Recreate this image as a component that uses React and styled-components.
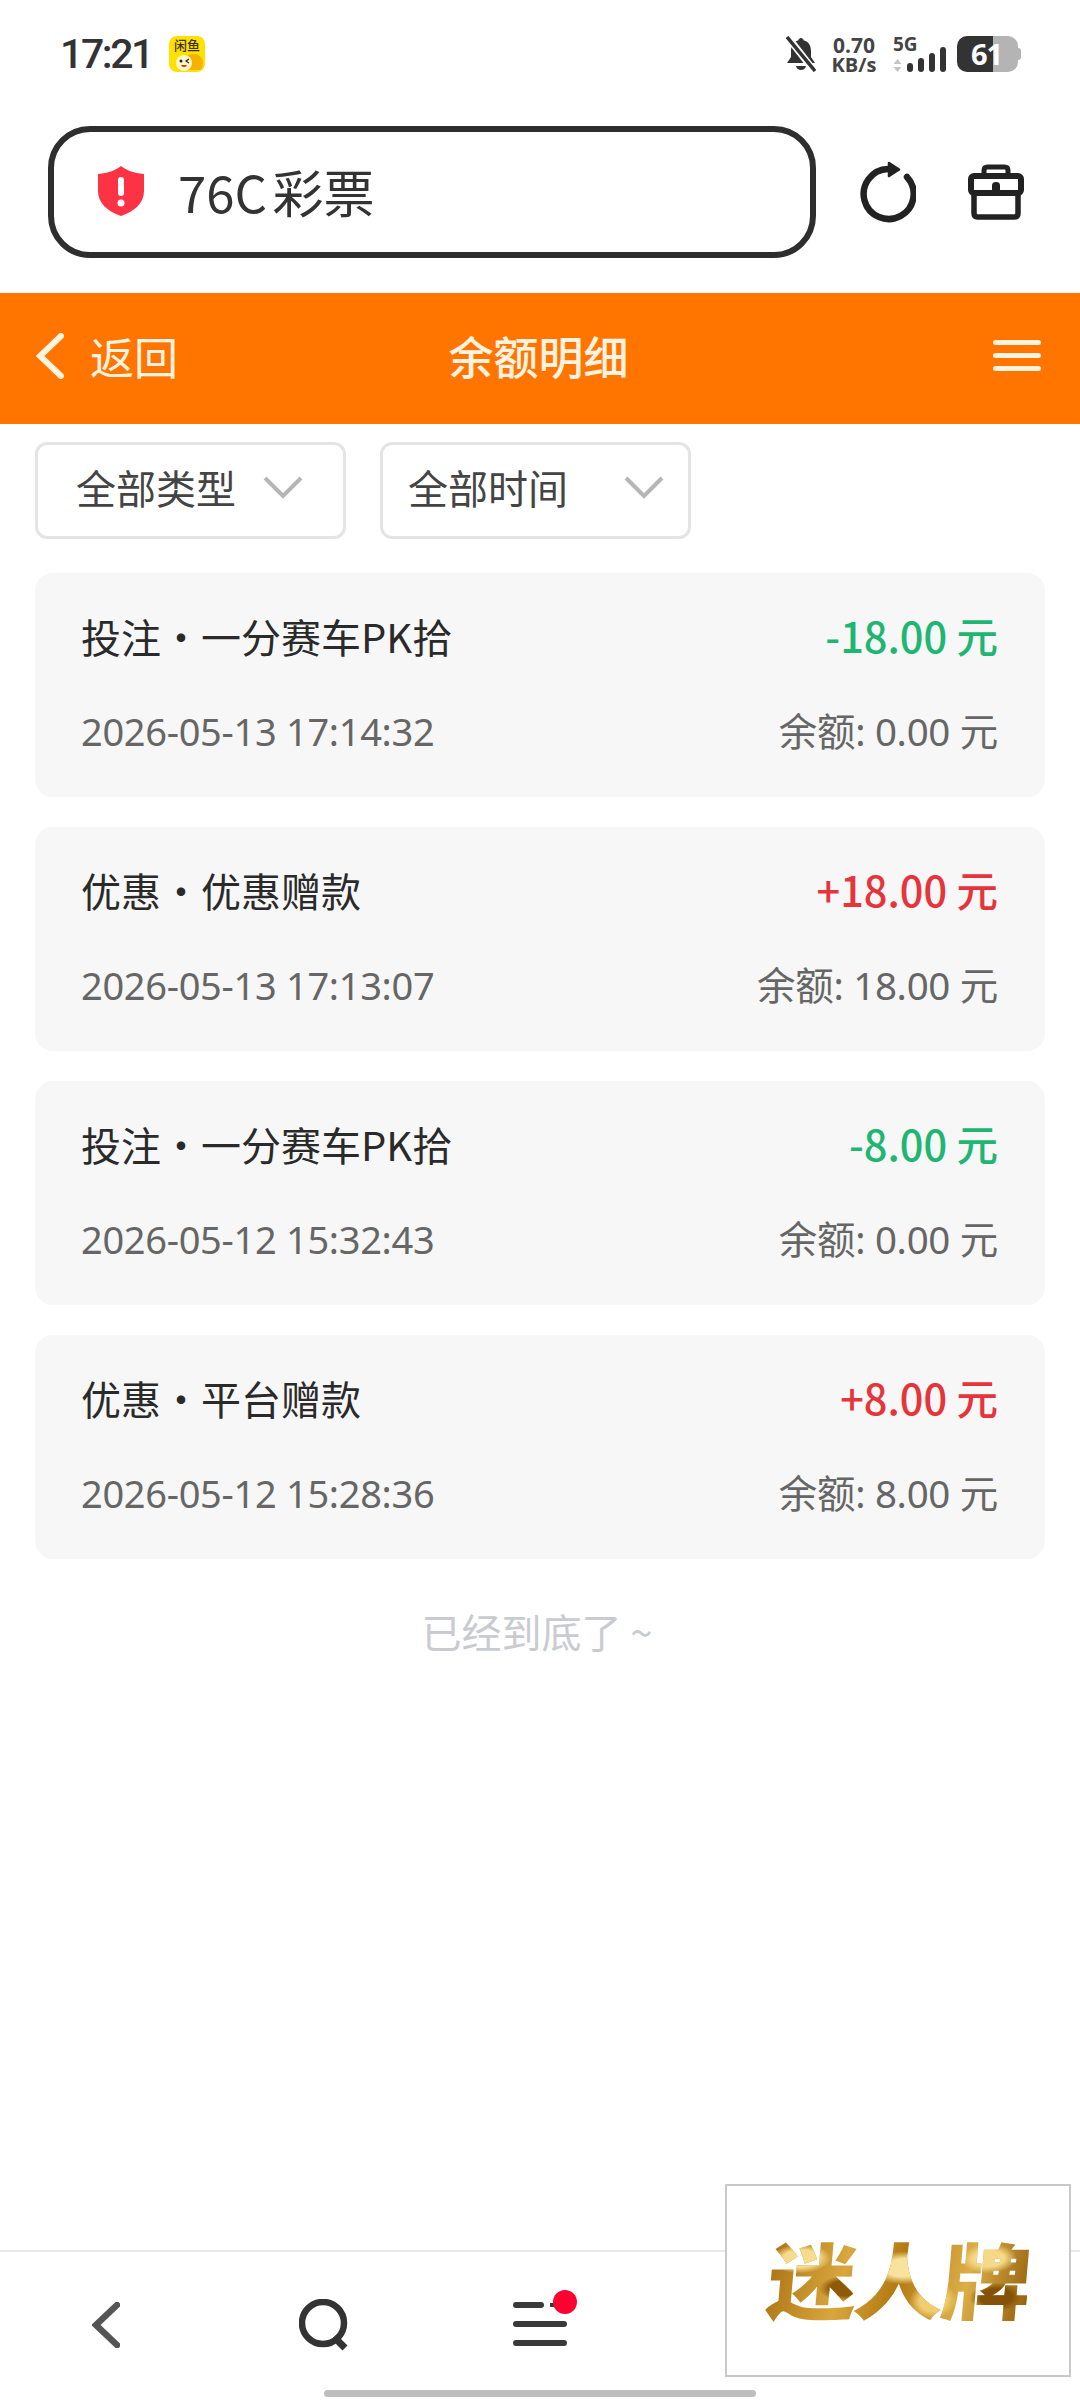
import React from "react";
import styled, { createGlobalStyle } from "styled-components";

const FONT = `"Noto Sans CJK SC", "Noto Sans", sans-serif`;

const Global = createGlobalStyle`
  html, body { margin: 0; padding: 0; background: #fff; }
  body { width: 1080px; height: 2400px; overflow: hidden; font-family: ${FONT}; }
  * { box-sizing: border-box; }
`;

const Page = styled.div`
  position: relative;
  width: 1080px;
  height: 2400px;
  display: flex;
  flex-direction: column;
  background: #fff;
`;

const StatusBar = styled.div`
  height: 126px;
  padding: 36px 62px 0 60px;
  display: flex;
  justify-content: space-between;
  align-items: flex-start;
`;
const StatusLeft = styled.div`
  display: flex;
  align-items: center;
  gap: 17px;
  height: 36px;
`;
const Time = styled.span`
  font-family: Roboto, sans-serif;
  font-weight: 500;
  font-size: 41px;
  line-height: 36px;
  letter-spacing: -2.4px;
  color: #333;
`;
const StatusRight = styled.div`
  display: flex;
  align-items: flex-start;
  height: 36px;
`;
const Speed = styled.div`
  display: flex;
  flex-direction: column;
  align-items: center;
  gap: 2px;
  width: 44px;
  margin-left: 16px;
  font-family: "Open Sans", sans-serif;
  font-weight: 700;
  color: #444;
`;
const SpeedLine = styled.span`
  font-size: ${p => p.$size}px;
  line-height: 18px;
  white-space: nowrap;
`;
const Network = styled.div`
  position: relative;
  width: 53px;
  height: 36px;
  margin-left: 17px;
`;
const NetworkLabel = styled.span`
  position: absolute;
  left: 0;
  top: 0;
  font-family: "Open Sans", sans-serif;
  font-weight: 700;
  font-size: 19px;
  line-height: 17px;
  color: #444;
`;
const Battery = styled.div`
  position: relative;
  width: 61px;
  height: 36px;
  margin-left: 11px;
  border-radius: 10px;
  background: linear-gradient(90deg, #333 0 36px, #b4b4b4 36px 100%);
  color: #fff;
  font-family: "Open Sans", sans-serif;
  font-weight: 700;
  font-size: 29px;
  line-height: 36px;
  padding-left: 14px;
  letter-spacing: -1px;
  &::after {
    content: "";
    position: absolute;
    right: -3px;
    top: 12px;
    width: 3px;
    height: 12px;
    border-radius: 0 3px 3px 0;
    background: #b4b4b4;
  }
`;

const AddressRow = styled.div`
  height: 167px;
  padding: 0 56px 35px 48px;
  display: flex;
  align-items: center;
`;
const UrlBox = styled.div`
  width: 768px;
  height: 132px;
  border: 6px solid #2e2e2e;
  border-radius: 42px;
  display: flex;
  align-items: center;
  padding: 0 0 2px 43px;
  gap: 33px;
  flex: none;
`;
const UrlText = styled.span`
  font-size: 51px;
  line-height: 60px;
  color: #333;
  word-spacing: -6px;
`;
const ToolIcons = styled.div`
  flex: 1;
  display: flex;
  justify-content: space-between;
  align-items: center;
  padding-left: 44px;
`;

const Header = styled.div`
  height: 131px;
  background: #ff7500;
  display: grid;
  grid-template-columns: 1fr auto 1fr;
  align-items: center;
  padding: 0 39px 6px 36px;
`;
const BackLink = styled.div`
  display: flex;
  align-items: center;
  gap: 26px;
  font-size: 44px;
  color: #fff3e0;
`;
const Title = styled.div`
  font-size: 45px;
  font-weight: 500;
  color: #fff3e0;
`;
const HeaderMenu = styled.div`
  justify-self: end;
  display: flex;
  flex-direction: column;
  gap: 8px;
  width: 48px;
`;
const HeaderBar = styled.span`
  height: 5px;
  border-radius: 3px;
  background: #fff3e0;
`;

const Filters = styled.div`
  display: flex;
  gap: 34px;
  padding: 18px 35px 0;
`;
const Filter = styled.div`
  width: 311px;
  height: 97px;
  border: 3px solid #e4e4e4;
  border-radius: 12px;
  padding: 0 ${p => p.$padR}px 8px ${p => p.$pad}px;
  display: flex;
  align-items: center;
  justify-content: space-between;
  font-size: 40px;
  line-height: 60px;
  color: #444;
`;

const List = styled.div`
  display: flex;
  flex-direction: column;
  gap: 30px;
  padding: 34px 35px 0;
`;
const Card = styled.div`
  height: 224px;
  border-radius: 18px;
  background: #f7f7f7;
  padding: 34px 47px 0 46px;
  display: flex;
  flex-direction: column;
  gap: 40px;
`;
const CardRow = styled.div`
  display: flex;
  justify-content: space-between;
  align-items: baseline;
  height: 56px;
`;
const CardTitle = styled.span`
  font-size: 40px;
  line-height: 56px;
  color: #2a2a2a;
`;
const Amount = styled.span`
  font-size: 41.5px;
  line-height: 56px;
  font-weight: 500;
  color: ${p => (p.$up ? "#e5353b" : "#1fb572")};
`;
const Muted = styled.span`
  font-size: 38px;
  line-height: 56px;
  letter-spacing: -0.3px;
  color: #666;
  font-family: "Noto Sans", ${FONT};
`;
const Balance = styled(Muted)`
  font-size: 38.5px;
`;
const EndNote = styled.div`
  margin-top: 44px;
  padding-right: 6px;
  text-align: center;
  font-size: 40px;
  line-height: 56px;
  color: #c9cbd0;
`;

const BottomNav = styled.div`
  margin-top: auto;
  height: 150px;
  border-top: 2px solid #e8e8e8;
  display: flex;
  flex-direction: column;
  justify-content: space-between;
  padding: 50px 0 3px;
`;
const NavRow = styled.div`
  display: flex;
  align-items: flex-start;
`;
const NavSlot = styled.div`
  width: ${p => p.$w}px;
  margin-left: ${p => p.$ml}px;
  margin-top: ${p => p.$mt || 0}px;
  flex: none;
  display: flex;
`;
const HomeBar = styled.div`
  width: 432px;
  height: 7px;
  border-radius: 4px;
  background: #bdbdbd;
  margin: 0 auto;
`;
const AdBox = styled.div`
  position: absolute;
  left: 725px;
  top: 2184px;
  width: 346px;
  height: 193px;
  background: #fff;
  border: 2px solid #c9c9c9;
  display: flex;
  align-items: center;
  justify-content: center;
  padding-bottom: 8px;
`;
const AdText = styled.span`
  font-family: ${FONT};
  font-weight: 900;
  font-size: 90px;
  line-height: 100px;
  letter-spacing: -3px;
  display: inline-block;
  transform: skewX(-5deg) scaleY(0.92);
  background:
    radial-gradient(ellipse 30px 16px at 12% 30%, #f6dc8c 0 60%, transparent 100%),
    radial-gradient(ellipse 26px 14px at 30% 62%, #8f5a08 0 60%, transparent 100%),
    radial-gradient(ellipse 34px 18px at 52% 40%, #f8e29c 0 55%, transparent 100%),
    radial-gradient(ellipse 24px 20px at 64% 76%, #f0cd72 0 55%, transparent 100%),
    radial-gradient(ellipse 28px 16px at 84% 30%, #f5d987 0 55%, transparent 100%),
    radial-gradient(ellipse 26px 16px at 88% 72%, #835208 0 60%, transparent 100%),
    linear-gradient(100deg, #a8700f 0%, #d9a73e 30%, #b47a12 50%, #dcae48 75%, #94600c 100%);
  -webkit-background-clip: text;
  background-clip: text;
  color: transparent;
`;

const BellIcon = () => (
  <svg width="30" height="36" viewBox="0 0 30 36">
    <path d="M15 2c1.400 0 2.400 1 2.600 2.200C23 5.500 25 10 25 15v6l4 6H1l4-6v-6C5 10 7 5.500 12.400 4.200 12.600 3 13.600 2 15 2z" fill="#333" />
    <path d="M10 30h10c-.6 2.500-2.500 4-5 4s-4.400-1.500-5-4z" fill="#333" />
    <path d="M1 0l28 36" stroke="#fff" strokeWidth="7" />
    <path d="M1 1l28 34" stroke="#333" strokeWidth="3.500" />
  </svg>
);

const SignalIcon = () => (
  <svg width="53" height="36" viewBox="0 0 53 36">
    <path d="M4.500 23l4 5h-8zM4.500 36l-4-5h8z" fill="#c4c4c4" />
    <rect x="14" y="27" width="6" height="9" rx="3" fill="#333" />
    <rect x="25" y="22" width="6" height="14" rx="3" fill="#333" />
    <rect x="36" y="17" width="6" height="19" rx="3" fill="#333" />
    <rect x="47" y="11" width="6" height="25" rx="3" fill="#333" />
  </svg>
);

const AppBadge = () => (
  <svg width="36" height="36" viewBox="0 0 36 36">
    <rect width="36" height="36" rx="8" fill="#ffe100" />
    <text x="18" y="14" textAnchor="middle" fontFamily="Noto Sans CJK SC, sans-serif" fontSize="13" fontWeight="500" fill="#3a3000">闲鱼</text>
    <path d="M10 34c0-9 6-16 15-16 6 0 9 5 9 9 0 3-1 6-3 7z" fill="#f5b300" />
    <circle cx="15" cy="27" r="8" fill="#fff6c8" />
    <circle cx="12" cy="25" r="1.500" fill="#222" />
    <path d="M20 23l-3 2 3 2" stroke="#222" strokeWidth="1.200" fill="none" />
    <path d="M12 29c1 3 5 3 6 0z" fill="#d14b1f" />
  </svg>
);

const ShieldIcon = () => (
  <svg width="48" height="50" viewBox="0 0 48 50">
    <path d="M24 0c5 4 12 7 23 8 v17c0 12-9 20-23 25C10 45 1 37 1 25V8C12 7 19 4 24 0z" fill="#fb3344" />
    <rect x="21" y="11" width="6" height="19" rx="3" fill="#fff" />
    <circle cx="24" cy="37" r="3.500" fill="#fff" />
  </svg>
);

const RefreshIcon = () => (
  <svg width="56" height="62" viewBox="0 0 56 62" fill="none">
    <path d="M47 16A25 25 0 1 1 28 8" stroke="#222" strokeWidth="6.500" strokeLinecap="round" />
    <path d="M29 2l10 6.500L29 15z" fill="#222" stroke="#222" strokeWidth="2.500" strokeLinejoin="round" />
  </svg>
);

const ToolboxIcon = () => (
  <svg width="56" height="56" viewBox="0 0 56 56" fill="none">
    <path d="M16 10V6.500C16 4 17 3 19.500 3h17C39 3 40 4 40 6.500V10" stroke="#222" strokeWidth="5" />
    <rect x="3" y="12" width="50" height="17" rx="3" stroke="#222" strokeWidth="6" />
    <path d="M6 29v20c0 2.500 1 4 3.500 4h37c2.500 0 3.500-1.500 3.500-4V29" stroke="#222" strokeWidth="5.500" />
    <rect x="24" y="18" width="8" height="14" rx="3.500" fill="#222" />
  </svg>
);

const BackChevron = ({ color = "#fff3e0", w = 28, h = 46, sw = 6 }) => (
  <svg width={w} height={h} viewBox={`0 0 ${w} ${h}`} fill="none">
    <path d={`M${w - 3} 3L4 ${h / 2}L${w - 3} ${h - 3}`} stroke={color} strokeWidth={sw} strokeLinecap="round" />
  </svg>
);

const DownChevron = () => (
  <svg width="40" height="24" viewBox="0 0 40 24" fill="none">
    <path d="M2 3l18 18L38 3" stroke="#b5b5b5" strokeWidth="4" />
  </svg>
);

const SearchIcon = () => (
  <svg width="50" height="52" viewBox="0 0 50 52" fill="none">
    <circle cx="24" cy="24" r="21" stroke="#333" strokeWidth="6.500" />
    <path d="M35 38l11 11" stroke="#333" strokeWidth="7" />
  </svg>
);

const MenuIcon = () => (
  <svg width="66" height="62" viewBox="0 0 66 62">
    <rect x="0" y="12" width="31" height="6" rx="3" fill="#3a3a3a" />
    <rect x="37" y="13" width="6" height="4" fill="#3a3a3a" />
    <rect x="0" y="31" width="54" height="6" rx="3" fill="#3a3a3a" />
    <rect x="0" y="50" width="54" height="6" rx="3" fill="#3a3a3a" />
    <circle cx="52" cy="12" r="12" fill="#ff0030" />
  </svg>
);

const rows = [
  { t: "投注・一分赛车PK拾", a: "-18.00 元", d: "2026-05-13 17:14:32", b: "余额: 0.00 元" },
  { t: "优惠・优惠赠款", a: "+18.00 元", up: true, d: "2026-05-13 17:13:07", b: "余额: 18.00 元" },
  { t: "投注・一分赛车PK拾", a: "-8.00 元", d: "2026-05-12 15:32:43", b: "余额: 0.00 元" },
  { t: "优惠・平台赠款", a: "+8.00 元", up: true, d: "2026-05-12 15:28:36", b: "余额: 8.00 元" },
];

export default function App() {
  return (
    <Page>
      <Global />
      <StatusBar>
        <StatusLeft>
          <Time>17:21</Time>
          <AppBadge />
        </StatusLeft>
        <StatusRight>
          <BellIcon />
          <Speed>
            <SpeedLine $size={21}>0.70</SpeedLine>
            <SpeedLine $size={20}>KB/s</SpeedLine>
          </Speed>
          <Network>
            <SignalIcon />
            <NetworkLabel>5G</NetworkLabel>
          </Network>
          <Battery>61</Battery>
        </StatusRight>
      </StatusBar>

      <AddressRow>
        <UrlBox>
          <ShieldIcon />
          <UrlText>76C 彩票</UrlText>
        </UrlBox>
        <ToolIcons>
          <RefreshIcon />
          <ToolboxIcon />
        </ToolIcons>
      </AddressRow>

      <Header>
        <BackLink>
          <BackChevron />
          返回
        </BackLink>
        <Title>余额明细</Title>
        <HeaderMenu>
          <HeaderBar />
          <HeaderBar />
          <HeaderBar />
        </HeaderMenu>
      </Header>

      <Filters>
        <Filter $pad={38} $padR={40}>
          全部类型
          <DownChevron />
        </Filter>
        <Filter $pad={25} $padR={24}>
          全部时间
          <DownChevron />
        </Filter>
      </Filters>

      <List>
        {rows.map((r, i) => (
          <Card key={i}>
            <CardRow>
              <CardTitle>{r.t}</CardTitle>
              <Amount $up={r.up}>{r.a}</Amount>
            </CardRow>
            <CardRow>
              <Muted>{r.d}</Muted>
              <Balance>{r.b}</Balance>
            </CardRow>
          </Card>
        ))}
      </List>

      <EndNote>已经到底了 ~</EndNote>

      <BottomNav>
        <NavRow>
          <NavSlot $w={28} $ml={92}>
            <BackChevron color="#555" w={28} h={46} sw={6.5} />
          </NavSlot>
          <NavSlot $w={50} $ml={179} $mt={-3}>
            <SearchIcon />
          </NavSlot>
          <NavSlot $w={66} $ml={164} $mt={-12}>
            <MenuIcon />
          </NavSlot>
        </NavRow>
        <HomeBar />
      </BottomNav>

      <AdBox>
        <AdText>迷人牌</AdText>
      </AdBox>
    </Page>
  );
}
